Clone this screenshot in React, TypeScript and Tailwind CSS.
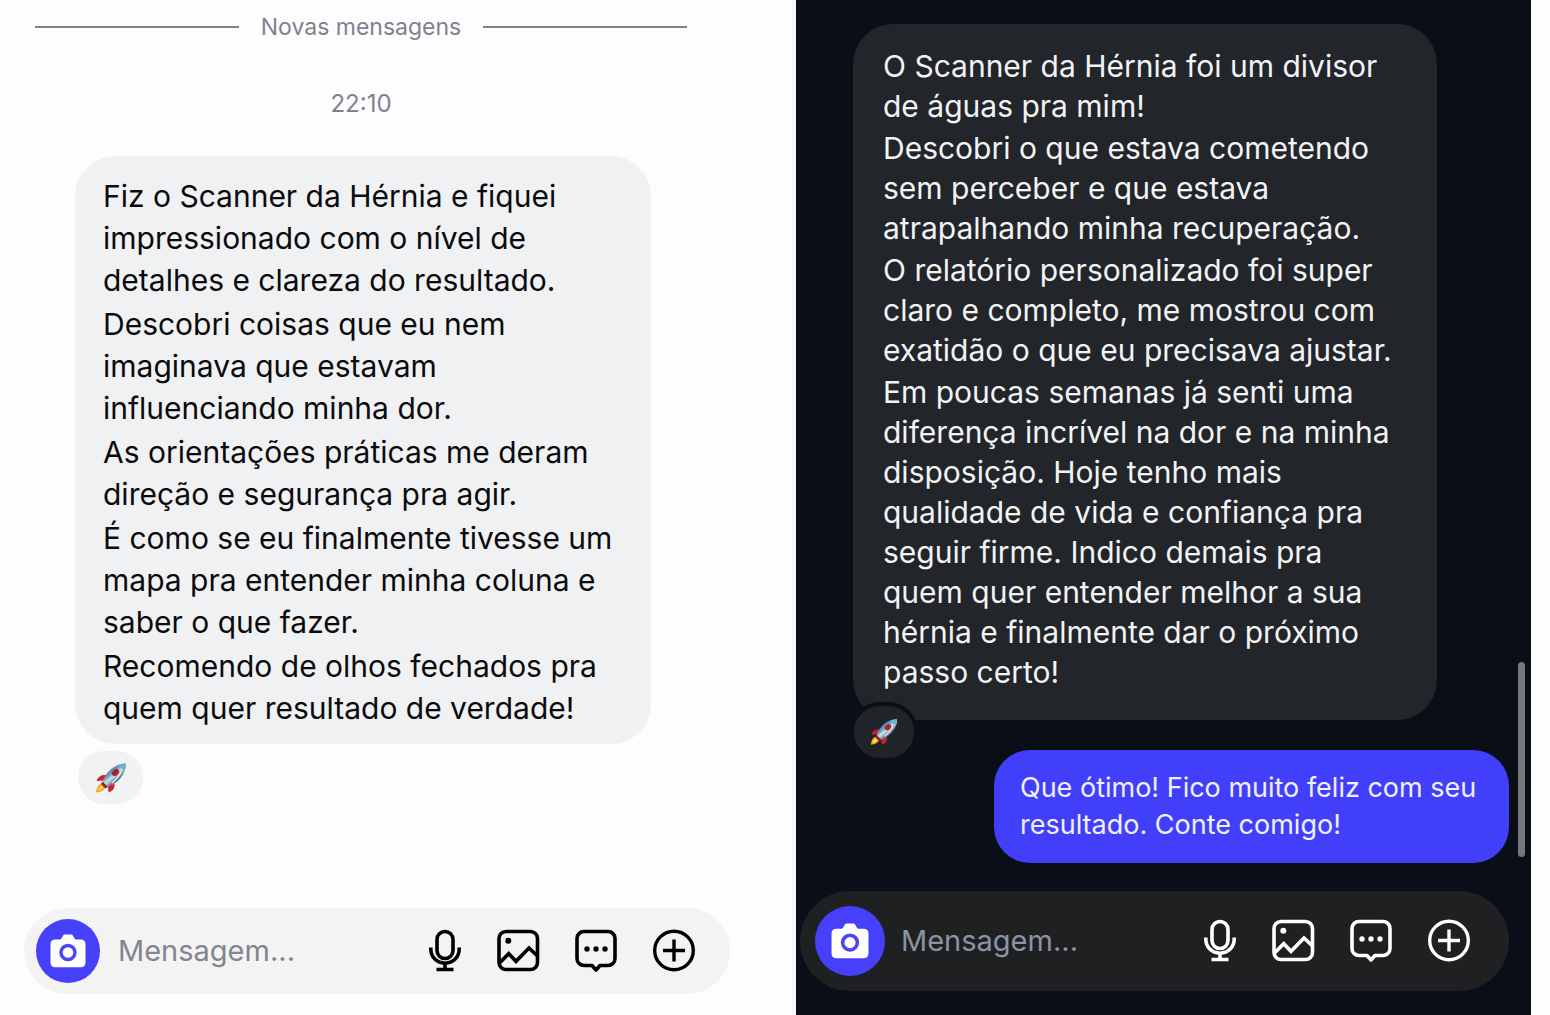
import { useId } from "react";
import clsx from "clsx";

const leftMessage = [
  "Fiz o Scanner da Hérnia e fiquei impressionado com o nível de detalhes e clareza do resultado.",
  "Descobri coisas que eu nem imaginava que estavam influenciando minha dor.",
  "As orientações práticas me deram direção e segurança pra agir.",
  "É como se eu finalmente tivesse um mapa pra entender minha coluna e saber o que fazer.",
  "Recomendo de olhos fechados pra quem quer resultado de verdade!",
];

const rightMessage = [
  "O Scanner da Hérnia foi um divisor de águas pra mim!",
  "Descobri o que estava cometendo sem perceber e que estava atrapalhando minha recuperação.",
  "O relatório personalizado foi super claro e completo, me mostrou com exatidão o que eu precisava ajustar.",
  "Em poucas semanas já senti uma diferença incrível na dor e na minha disposição. Hoje tenho mais qualidade de vida e confiança pra seguir firme. Indico demais pra quem quer entender melhor a sua hérnia e finalmente dar o próximo passo certo!",
];

const CameraIcon = ({ className }: { className?: string }) => (
  <svg viewBox="0 0 36 34" className={className} aria-hidden="true">
    <path
      fill="#fff"
      d="M5 5.5h4.6c1 0 1.6-.6 2.1-1.6l.9-1.700C13.200 1 14 .5 15.200.5h5.600c1.200 0 2 .5 2.600 1.700l.9 1.700c.5 1 1.100 1.600 2.100 1.600H31c2.800 0 4.500 1.700 4.500 4.500v18.500c0 3-1.700 4.800-4.700 4.800H5.200c-3 0-4.700-1.800-4.700-4.800V10c0-2.800 1.700-4.500 4.500-4.500z"
    />
    <circle cx="18" cy="18.500" r="7" fill="#fff" stroke="#4a45f5" strokeWidth="3.400" />
  </svg>
);

const MicIcon = () => (
  <svg viewBox="0 0 34 44" className="h-11 w-[34px]" fill="none" stroke="currentColor" strokeWidth="3.6" aria-hidden="true">
    <rect x="9" y="2.500" width="16" height="27" rx="8" />
    <path d="M2.800 18.500v1.500c0 8 6 14.200 14.200 14.200S31.200 28 31.200 20v-1.500" />
    <path d="M17 34v6M8.500 40.500h17" />
  </svg>
);

const ImageIcon = () => (
  <svg viewBox="0 0 44 44" className="size-11" fill="none" stroke="currentColor" strokeWidth="3.600" aria-hidden="true">
    <rect x="3" y="2.500" width="38.500" height="38" rx="7" />
    <circle cx="12.300" cy="11.800" r="3" fill="currentColor" stroke="none" />
    <path d="M3.500 34l9.200-9.300 7.300 7.600 13-13.300 8.500 8" />
  </svg>
);

const ChatIcon = () => (
  <svg viewBox="0 0 44 44" className="size-11" fill="none" stroke="currentColor" strokeWidth="3.600" strokeLinejoin="round" aria-hidden="true">
    <path d="M10 2.500h24c3.500 0 7 2.500 7 7v20c0 4.500-3.500 7-7 7h-8L22 41l-4-4.500h-8c-3.500 0-7-2.500-7-7v-20c0-4.500 3.500-7 7-7z" />
    <g fill="currentColor" stroke="none">
      <circle cx="13" cy="20" r="2.700" />
      <circle cx="22" cy="20" r="2.700" />
      <circle cx="31" cy="20" r="2.700" />
    </g>
  </svg>
);

const PlusIcon = () => (
  <svg viewBox="0 0 44 44" className="size-11" fill="none" stroke="currentColor" strokeWidth="3.400" aria-hidden="true">
    <circle cx="22" cy="21.500" r="19.300" />
    <path d="M22 10.500v22M11 21.500h22" />
  </svg>
);

const Rocket = ({ className }: { className?: string }) => {
  const id = useId();
  return (
    <svg viewBox="0 0 32 32" className={className} role="img" aria-label="Foguete">
      <defs>
        <linearGradient id={id} x1="10" y1="8" x2="20" y2="20" gradientUnits="userSpaceOnUse">
          <stop offset="0" stopColor="#3f7296" />
          <stop offset=".45" stopColor="#6fa3c3" />
          <stop offset=".65" stopColor="#d5e3eb" />
          <stop offset="1" stopColor="#56718a" />
        </linearGradient>
      </defs>
      <path d="M11 13C7 12.500 3.500 14 1.500 19l7-.5zM19.500 22c.5 4-1.500 7-6 8.500l-.5-7z" fill="#d01f2c" />
      <path d="M6.500 21.500C3 22.500 1.500 26 1 30.500c4.500-.5 8-2 9.500-5.500z" fill="#f3a51e" />
      <path d="M6.500 23.500c-2 1-3 3-3.500 5 2.500-.5 4.500-1.500 5.500-3.500z" fill="#ffdf5a" />
      <path d="M31 1.500C21 1.500 12 8 7.500 19.500l5.500 5.500C24 20.500 31 11.500 31 1.500z" fill={`url(#${id})`} />
      <path d="M31 1.500c-3 0-5.500.5-8 1.500l6.500 6c1-2.500 1.500-5 1.500-7.500z" fill="#6fb0d2" />
      <path d="M7.500 19.500L6 22l4.500 4.500L13 25z" fill="#8f2430" />
      <ellipse cx="20.500" cy="10.500" rx="4" ry="3" transform="rotate(-40 20.500 10.500)" fill="#a9232f" />
      <path d="M17 21c3-2.500 7-6.500 9-11" stroke="#eef5f9" strokeWidth="1.300" fill="none" />
    </svg>
  );
};

const Composer = ({ dark = false }: { dark?: boolean }) => {
  return (
    <form
      onSubmit={(e) => e.preventDefault()}
      className={clsx(
        "flex items-center rounded-full",
        dark
          ? "h-[100px] gap-4 bg-[#1f2022] pl-[15px] pr-[38px] text-white"
          : "h-[86px] gap-[18px] bg-[#f3f3f3] pl-3 pr-[34px] text-black"
      )}
    >
      <button
        type="button"
        aria-label="Câmera"
        className={clsx(
          "flex shrink-0 items-center justify-center rounded-full bg-[#4640fa]",
          dark ? "size-[70px]" : "size-16"
        )}
      >
        <CameraIcon className={dark ? "h-9 w-[38px]" : "h-[34px] w-9"} />
      </button>
      <input
        type="text"
        aria-label="Mensagem"
        placeholder="Mensagem..."
        className={clsx(
          "min-w-0 flex-1 bg-transparent text-[29px] leading-10 outline-none",
          dark ? "placeholder:text-[#8a94a3]" : "placeholder:text-[#82858f]"
        )}
      />
      <div className="flex shrink-0 items-center gap-[34px]">
        <button type="button" aria-label="Gravar áudio"><MicIcon /></button>
        <button type="button" aria-label="Enviar imagem"><ImageIcon /></button>
        <button type="button" aria-label="Respostas rápidas"><ChatIcon /></button>
        <button type="button" aria-label="Mais opções"><PlusIcon /></button>
      </div>
    </form>
  );
};

const LightChat = () => (
  <section className="flex flex-col border-r-4 border-[#f5f6f8] bg-[#fdfdfd] pb-[21px] pl-6 pr-[62px]">
    <div className="ml-[11px] mr-[43px] mt-3 flex items-center gap-[22px] text-[23px] leading-[30px] text-[#7f8190]">
      <span className="h-[2px] flex-1 bg-[#7d8090]" />
      <h2>Novas mensagens</h2>
      <span className="h-[2px] flex-1 bg-[#7d8090]" />
    </div>
    <time className="ml-[11px] mr-[43px] mt-[47px] text-center text-[24px] leading-[30px] text-[#7f8190]">22:10</time>
    <div className="ml-[51px] mt-[37px] flex max-w-[576px] flex-col gap-[2px] rounded-[40px] bg-[#f0f1f3] px-7 pb-[15px] pt-[19px] text-[30px] leading-[42px] text-[#0b0b0d]">
      {leftMessage.map((text) => (
        <p key={text}>{text}</p>
      ))}
    </div>
    <div className="mb-8 ml-[54px] mt-[7px] flex h-[53px] w-[65px] items-center justify-center rounded-full bg-[#f1f2f4]">
      <Rocket className="size-8" />
    </div>
    <div className="mt-auto">
      <Composer />
    </div>
  </section>
);

const DarkChat = () => (
  <section className="relative flex flex-col bg-[#0a0f17] pb-6 pl-1 pr-[22px] pt-6">
    <div className="ml-[53px] flex max-w-[584px] flex-col gap-[2px] rounded-[40px] bg-[#222529] px-[30px] pb-7 pt-[22px] text-[30px] leading-10 text-[#f2f3f5]">
      {rightMessage.map((text) => (
        <p key={text}>{text}</p>
      ))}
    </div>
    {/* reaction overlaps the bottom edge of the bubble */}
    <div className="relative -mt-[18px] ml-[50px] flex h-[60px] w-[68px] items-center justify-center rounded-full border-4 border-[#0a0f17] bg-[#202327]">
      <Rocket className="size-7" />
    </div>
    <div className="-mt-3 mb-7 max-w-[515px] self-end rounded-[36px] bg-[#423ffb] px-[26px] pb-5 pt-[19px] text-[27px] leading-[37px] text-[#f0f0ff]">
      <p>Que ótimo! Fico muito feliz com seu resultado. Conte comigo!</p>
    </div>
    <div className="mt-auto">
      <Composer dark />
    </div>
    <span className="absolute bottom-[158px] right-[6px] h-[195px] w-[7px] rounded-full bg-[#77787b]" />
  </section>
);

const App = () => {
  return (
    <main className="grid min-h-screen grid-cols-[minmax(0,796fr)_minmax(0,735fr)] bg-[#fdfdfd] pr-[19px] font-['Inter',sans-serif]">
      <LightChat />
      <DarkChat />
    </main>
  );
};

export default App;
